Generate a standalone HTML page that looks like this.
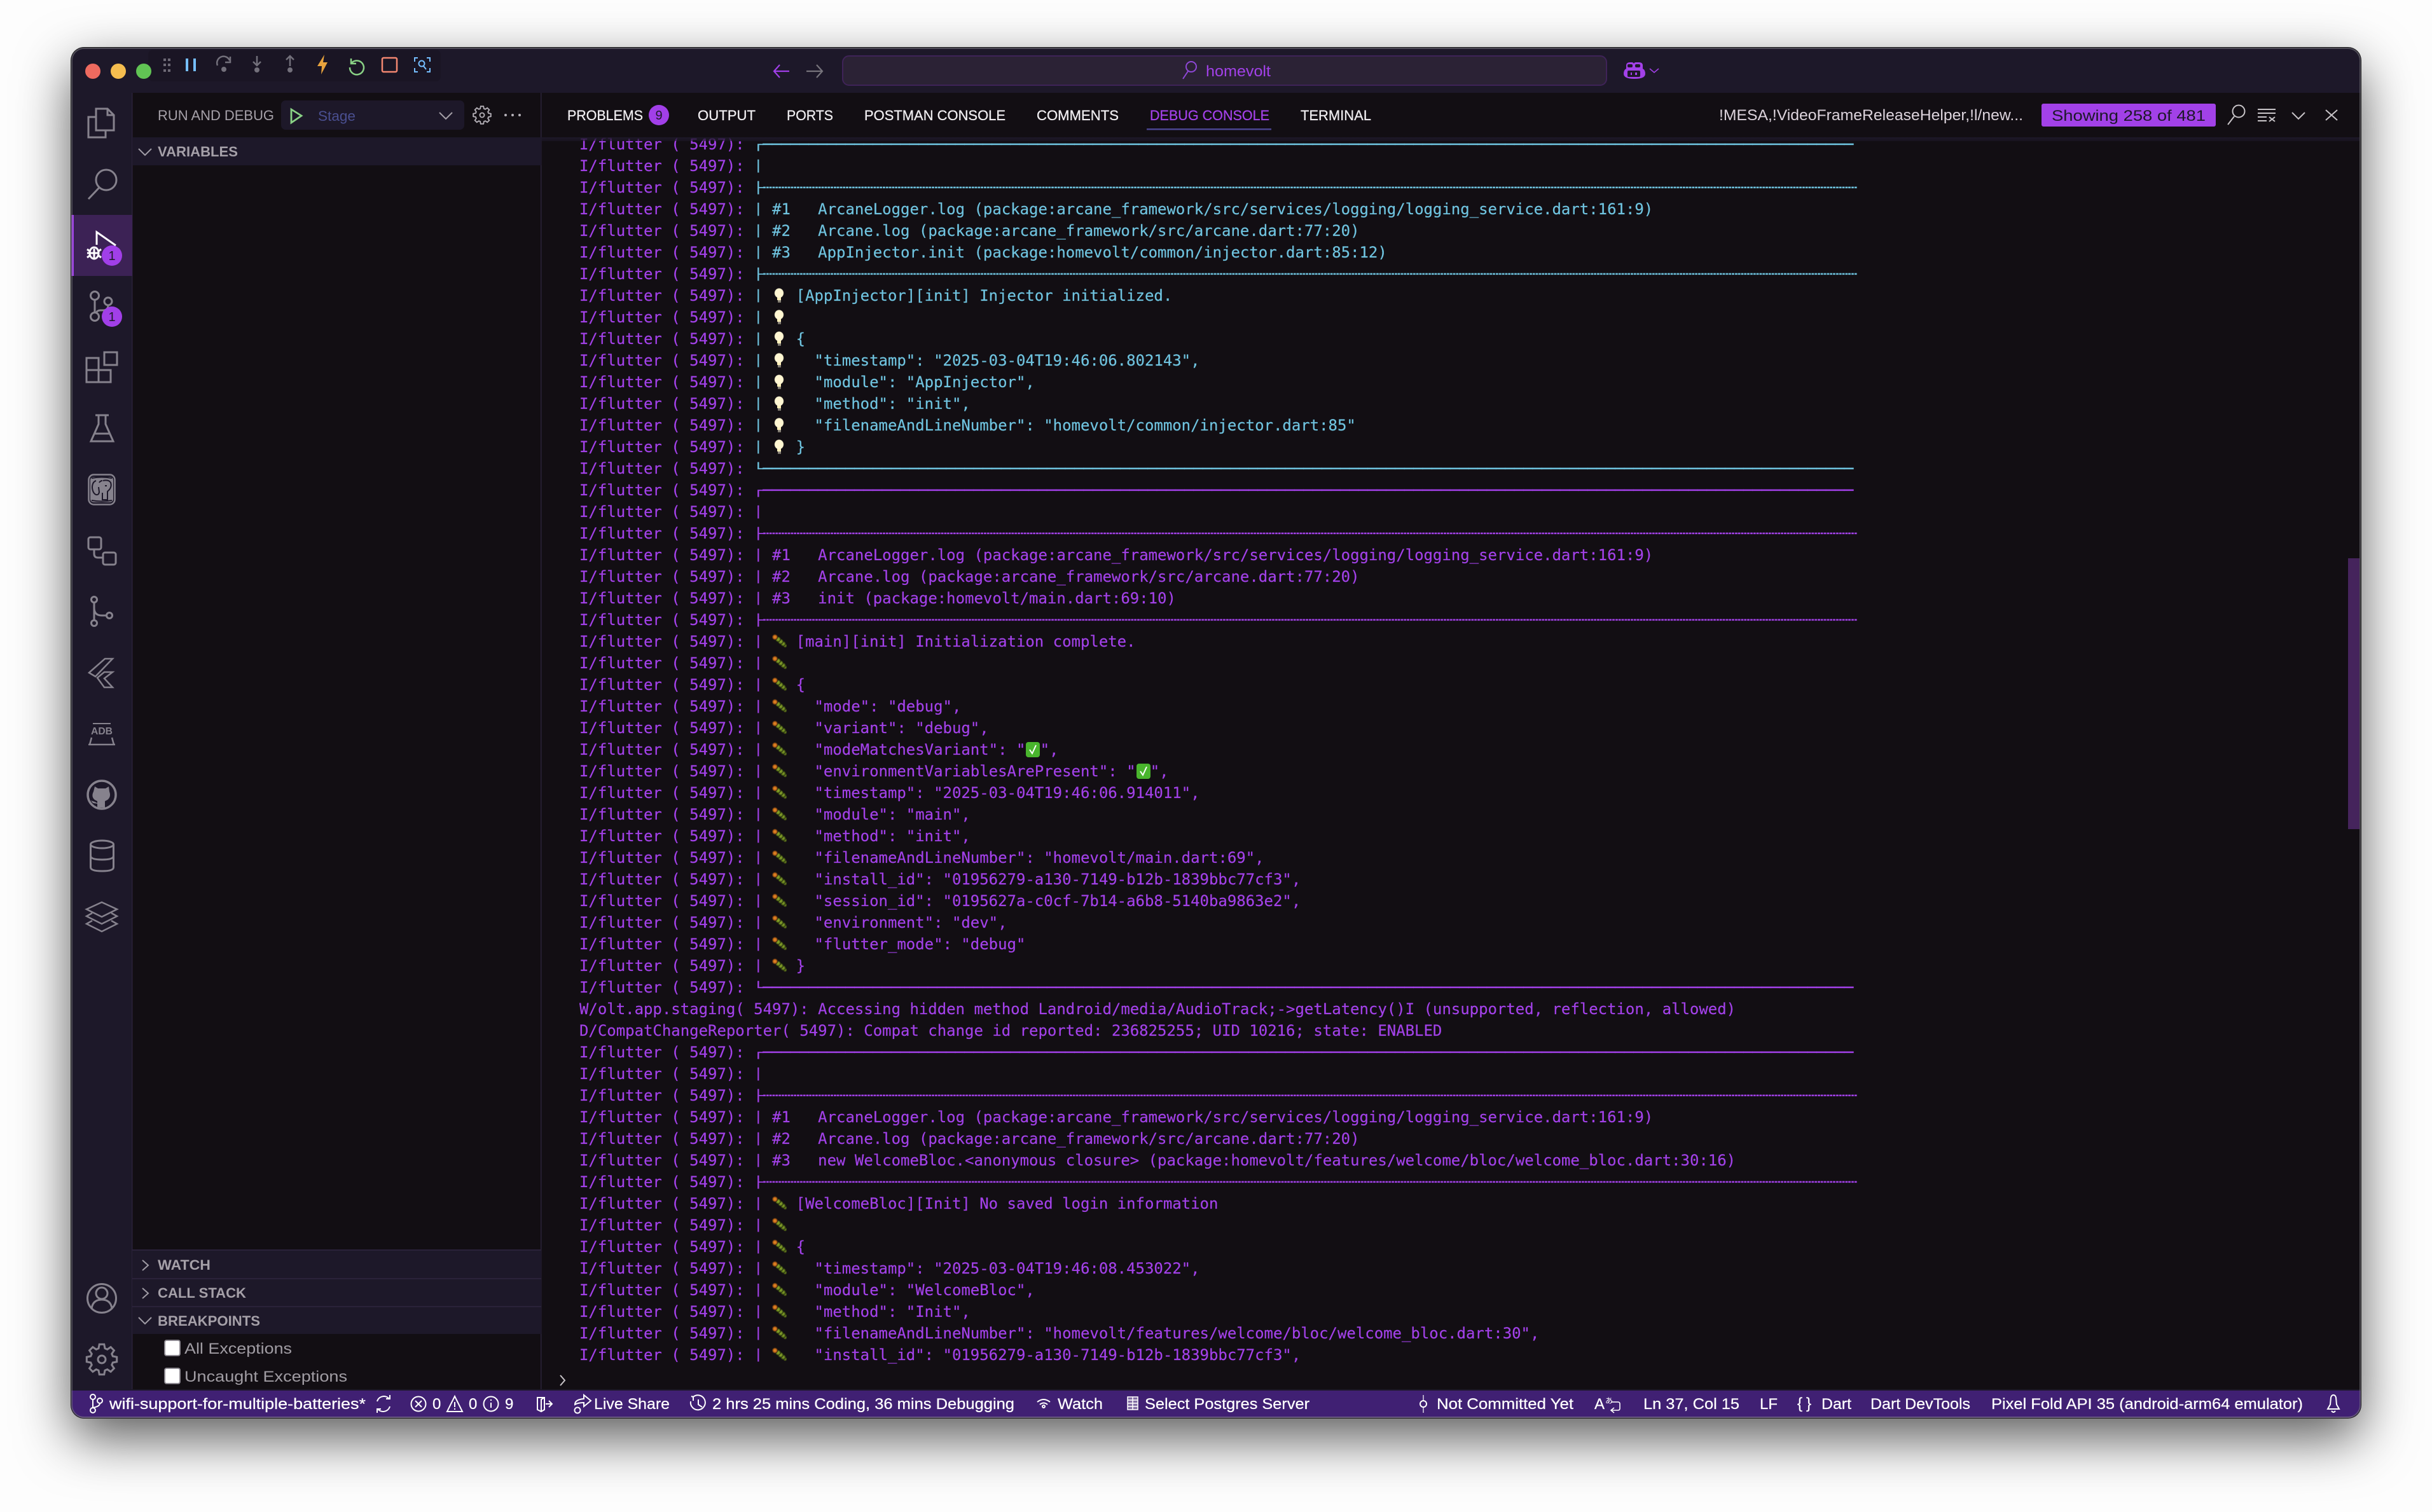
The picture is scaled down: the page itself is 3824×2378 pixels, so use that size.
<!DOCTYPE html>
<html lang="en"><head><meta charset="utf-8"><title>homevolt</title>
<style>
html,body{margin:0;padding:0;background:#fdfdfd;width:3824px;height:2378px;overflow:hidden}
#win{position:absolute;left:112px;top:75px;width:3600px;height:2155px;border-radius:20px;background:#120e13;box-shadow:0 0 0 1px #1a1a1a,0 31px 84px rgba(0,0,0,.65)}
#ui{position:absolute;left:0;top:0}
#ui text{font-family:"Liberation Sans","Noto Sans CJK JP",sans-serif}
#log{position:absolute;left:911px;top:216px;width:2780px;height:1971px;overflow:hidden;font:24px/34px "DejaVu Sans Mono","Liberation Mono",monospace;letter-spacing:-.02px;color:#a241e8;-webkit-text-stroke:.2px}
#in{position:absolute;left:0;top:-6px}
#in div{height:34px;white-space:pre}
em{font-style:normal;color:#6fc3df}
u{display:inline-block;text-decoration:none;transform:scaleY(.72)}
.h{letter-spacing:-.04px;-webkit-text-stroke:.5px}
.d{letter-spacing:.01px;-webkit-text-stroke:.4px}
.b,.l,.k{display:inline-block;width:23.2px;height:34px;vertical-align:top;background-repeat:no-repeat;-webkit-text-stroke:0}
.b{background-image:radial-gradient(circle at 4.5px 10px,#e09428 0,#d4731a 2px,#9c5018 3.2px,#33240f 4.2px,transparent 5px),radial-gradient(circle at 9.5px 13.5px,#93ad28 0,#6e8820 2.4px,#222a0c 4px,transparent 4.6px),radial-gradient(circle at 13.5px 17px,#93ad28 0,#678224 2.4px,#222a0c 4px,transparent 4.6px),radial-gradient(circle at 17.5px 20.5px,#8aa426 0,#607a1f 2.2px,#222a0c 3.8px,transparent 4.4px),radial-gradient(circle at 20.5px 23.5px,#7c9423 0,#414f15 2.2px,transparent 3.2px)}
.l{background-image:radial-gradient(ellipse 7.5px 8px at 11px 13px,#fff6d2 88%,transparent 100%),linear-gradient(#fff0b8,#fff0b8),linear-gradient(#9c968a,#6f6a60);background-size:100% 100%,6px 5px,5px 4px;background-position:0 0,8px 19px,8.5px 24px}
.k{position:relative}
.k svg{position:absolute;left:0;top:5px}
#sb{position:absolute;left:3692px;top:878px;width:18px;height:426px;background:#45245c}
#sh{position:absolute;left:851px;top:216px;width:2859px;height:6px;background:linear-gradient(#1d1829,rgba(29,24,41,.5))}
#rim{position:absolute;left:112px;top:75px;width:3600px;height:2155px;border-radius:20px;box-shadow:inset 0 0 0 2px rgba(120,120,125,.55);pointer-events:none}
</style></head><body>
<div id="win"></div>
<svg id="ui" width="3824" height="2378" viewBox="0 0 3824 2378" xmlns="http://www.w3.org/2000/svg">
<defs><clipPath id="wc"><rect x="112" y="75" width="3600" height="2155" rx="20"/></clipPath></defs>
<g clip-path="url(#wc)">
<rect x="112" y="75" width="3600" height="71" fill="#1d1829"/>
<rect x="112" y="146" width="96" height="2041" fill="#1d1829"/>
<rect x="207" y="146" width="1.5" height="2041" fill="#2a2239"/>
<rect x="850" y="146" width="1.5" height="2041" fill="#2a2239"/>
<rect x="208" y="216" width="643" height="44" fill="#1d1829"/>
<rect x="208" y="1967" width="643" height="131" fill="#1d1829"/>
<rect x="208" y="1965" width="643" height="2" fill="#2a2239"/><rect x="208" y="2010" width="643" height="2" fill="#2a2239"/><rect x="208" y="2054" width="643" height="2" fill="#2a2239"/>
<rect x="112" y="338" width="96" height="96" fill="#3c2255"/><rect x="112" y="338" width="4" height="96" fill="#a13fe8"/>
<rect x="112" y="2185" width="3600" height="2" fill="#1d1829"/>
<rect x="112" y="2187" width="3600" height="43" fill="#402073"/><rect x="112" y="2228" width="3600" height="2" fill="#5f3d8a"/>
</g>
<!-- debug toolbar -->
<rect x="233" y="78" width="460" height="50" rx="8" fill="#1a1524"/>
<!-- traffic lights -->
<circle cx="146" cy="112" r="12" fill="#ee6a5f"/><circle cx="186" cy="112" r="12" fill="#f5bd4f"/><circle cx="226" cy="112" r="12" fill="#61c454"/>
<g fill="#6d6975"><rect x="257" y="92" width="4" height="4"/><rect x="264" y="92" width="4" height="4"/><rect x="257" y="100" width="4" height="4"/><rect x="264" y="100" width="4" height="4"/><rect x="257" y="109" width="4" height="4"/><rect x="264" y="109" width="4" height="4"/></g>
<rect x="292" y="92" width="4" height="20" fill="#75beff"/><rect x="304" y="92" width="4" height="20" fill="#75beff"/>
<g fill="none" stroke="#73707b" stroke-width="2.5"><path d="M342 103a10 10 0 0 1 19-8M362 89v9h-8"/><path d="M404 88v15M398 97l6 6 6-6"/><path d="M456 104V88M450 94l6-6 6 6"/></g>
<g fill="#73707b"><circle cx="352" cy="109" r="4"/><circle cx="404" cy="110" r="4"/><circle cx="456" cy="110" r="4"/></g>
<path d="M510 86L499 104h7l-1 13 10-19h-7z" fill="#e8a33d"/>
<path d="M552 92v8h8M552 100a11 11 0 1 1-2 6" fill="none" stroke="#89d185" stroke-width="2.5"/>
<rect x="601" y="91" width="23" height="22" rx="2" fill="none" stroke="#f48771" stroke-width="2.5"/>
<path d="M652 97v-6h5M671 91h5v6M652 107v6h5M671 113h5v-6" fill="none" stroke="#75beff" stroke-width="2"/><circle cx="663" cy="100" r="4.5" fill="none" stroke="#75beff" stroke-width="2"/><path d="M666 104l4 5" stroke="#75beff" stroke-width="2"/>
<!-- nav + command center -->
<path d="M1241 112h-24M1226 102l-9 10 9 10" fill="none" stroke="#a03fe8" stroke-width="2.2"/>
<path d="M1268 112h24M1284 102l9 10-9 10" fill="none" stroke="#77747c" stroke-width="2.2"/>
<rect x="1325" y="88" width="1201" height="46" rx="10" fill="#2b2235" stroke="#3f2358" stroke-width="2"/>
<circle cx="1873" cy="105" r="8" fill="none" stroke="#8e47d6" stroke-width="2"/><path d="M1868 112l-8 12" stroke="#8e47d6" stroke-width="2"/>
<text x="1896" y="120" font-size="24" fill="#a241e8" textLength="102" lengthAdjust="spacingAndGlyphs">homevolt</text>
<!-- copilot -->
<path d="M2553 116q0-6 4-8v-5q0-5 6-5h3q2 0 3 2q1-2 3-2h5q6 0 6 5v5q4 2 4 8q0 8-17 8t-17-8z" fill="#a241e8"/>
<rect x="2559" y="111" width="20" height="10" rx="2" fill="#1d1829"/><rect x="2559" y="101" width="8" height="5" rx="2" fill="#1d1829"/><rect x="2571" y="101" width="8" height="5" rx="2" fill="#1d1829"/>
<rect x="2564" y="114" width="2" height="4" fill="#a241e8"/><rect x="2571" y="114" width="3" height="4" fill="#a241e8"/>
<path d="M2594 108l7 6 7-6" fill="none" stroke="#a241e8" stroke-width="1.6"/>
<!-- tabs -->
<g font-size="22" fill="#efedf0" stroke="#efedf0" stroke-width=".3">
<text x="892" y="189" textLength="119" lengthAdjust="spacingAndGlyphs">PROBLEMS</text>
<text x="1097" y="189" textLength="91" lengthAdjust="spacingAndGlyphs">OUTPUT</text>
<text x="1237" y="189" textLength="73" lengthAdjust="spacingAndGlyphs">PORTS</text>
<text x="1359" y="189" textLength="222" lengthAdjust="spacingAndGlyphs">POSTMAN CONSOLE</text>
<text x="1630" y="189" textLength="129" lengthAdjust="spacingAndGlyphs">COMMENTS</text>
<text x="1808" y="189" textLength="188" lengthAdjust="spacingAndGlyphs" fill="#a241e8" stroke="#a241e8">DEBUG CONSOLE</text>
<text x="2045" y="189" textLength="111" lengthAdjust="spacingAndGlyphs">TERMINAL</text>
</g>
<circle cx="1036" cy="181" r="16" fill="#a13fe8"/><text x="1036" y="188" font-size="20" fill="#1d1829" text-anchor="middle">9</text>
<rect x="1803" y="202" width="196" height="2.5" fill="#4a4590"/>
<text x="2703" y="189" font-size="24" fill="#dcd3dc" textLength="478" lengthAdjust="spacingAndGlyphs">!MESA,!VideoFrameReleaseHelper,!l/new...</text>
<rect x="3210" y="163" width="274" height="36" rx="3" fill="#a241e8"/>
<text x="3226" y="190" font-size="24" fill="#1d1829" textLength="242" lengthAdjust="spacingAndGlyphs">Showing 258 of 481</text>
<g fill="none" stroke="#c8c4c8" stroke-width="2"><circle cx="3520" cy="175" r="9.5"/><path d="M3513 183l-10 13"/><path d="M3550 172h28M3550 178h28M3550 184h14M3550 190h14M3568 184l9 7M3577 184l-9 7"/><path d="M3604 177l10 10 10-10"/><path d="M3657 173l18 16M3675 173l-18 16"/></g>
<!-- sidebar header -->
<text x="248" y="189" font-size="22" fill="#a5a0a8" textLength="183" lengthAdjust="spacingAndGlyphs">RUN AND DEBUG</text>
<rect x="442" y="158" width="288" height="46" rx="7" fill="#1d1829"/>
<path d="M458 172l16 10-16 11z" fill="none" stroke="#89d185" stroke-width="2.8"/>
<text x="500" y="190" font-size="22" fill="#4a4f90" textLength="59" lengthAdjust="spacingAndGlyphs">Stage</text>
<path d="M691 177l10 10 10-10" fill="none" stroke="#a5a0a8" stroke-width="2"/>
<g transform="translate(758 181) scale(.583)" fill="none" stroke="#b5b1b8" stroke-width="3.2"><path d="M17.3-5L23.7-3.75 23.7 3.75 17.3 5 15.74 8.73 19.4 14.1 14.1 19.4 8.73 15.74 5 17.3 3.75 23.7-3.75 23.7-5 17.3-8.73 15.74-14.1 19.4-19.4 14.1-15.74 8.73-17.3 5-23.7 3.75-23.7-3.75-17.3-5-15.74-8.73-19.4-14.1-14.1-19.4-8.73-15.74-5-17.3-3.75-23.7 3.75-23.7 5-17.3 8.73-15.74 14.1-19.4 19.4-14.1 15.74-8.73z"/><circle r="6"/></g>
<g fill="#b5b1b8"><circle cx="795" cy="181" r="2"/><circle cx="806" cy="181" r="2"/><circle cx="817" cy="181" r="2"/></g>
<!-- section headers -->
<g fill="none" stroke="#a09ca5" stroke-width="2"><path d="M218 234l10 10 10-10"/><path d="M224 1982l9 8-9 8"/><path d="M224 2026l9 8-9 8"/><path d="M218 2072l10 10 10-10"/></g>
<g font-size="22" font-weight="700" fill="#a5a0a8">
<text x="248" y="246" textLength="126" lengthAdjust="spacingAndGlyphs">VARIABLES</text>
<text x="248" y="1997" textLength="83" lengthAdjust="spacingAndGlyphs">WATCH</text>
<text x="248" y="2041" textLength="139" lengthAdjust="spacingAndGlyphs">CALL STACK</text>
<text x="248" y="2085" textLength="161" lengthAdjust="spacingAndGlyphs">BREAKPOINTS</text>
</g>
<rect x="259" y="2108" width="24" height="24" rx="3" fill="#fff" stroke="#8c8890" stroke-width="2"/>
<rect x="259" y="2152" width="24" height="24" rx="3" fill="#fff" stroke="#8c8890" stroke-width="2"/>
<g font-size="24" fill="#a09ca3"><text x="290" y="2129" textLength="169" lengthAdjust="spacingAndGlyphs">All Exceptions</text><text x="290" y="2173" textLength="256" lengthAdjust="spacingAndGlyphs">Uncaught Exceptions</text></g>
<path d="M881 2163l7 8-7 8" fill="none" stroke="#c8c4c8" stroke-width="2"/>
<!-- activity bar icons -->
<g fill="none" stroke="#86828d" stroke-width="3">
<path d="M151 205V171h18l10 10v24zM169 171v10h10M151 184h-12v32h27v-11"/>
<circle cx="167" cy="283" r="16"/><path d="M156 295l-17 18"/>
<circle cx="149" cy="465" r="6.5"/><circle cx="170" cy="474" r="6"/><circle cx="149" cy="498" r="6.5"/><path d="M149 472v19M170 480q0 8-8 8h-4q-5 0-7 4"/>
<path d="M136 563h19v38h-19zM136 582h38v19h-19M164 554h20v20h-20z"/>
<path d="M150 653h21M155 653v14l-12 27h35l-12-27v-14M149 682h23"/>
<rect x="139.500" y="746.500" width="41" height="47" rx="8" stroke-width="2.5"/>
<rect x="139" y="845" width="20" height="19" rx="3"/><rect x="162" y="869" width="20" height="19" rx="3"/><path d="M148 864v7q0 6 6 6h8"/>
<circle cx="148" cy="943" r="4.5"/><circle cx="148" cy="980" r="4.5"/><circle cx="172" cy="968" r="4.5"/><path d="M148 948v27M148 956q0 12 12 12h7"/>
<path d="M140 1058l25-22h12l-27 28zM153 1066l11-9h13l-13 10 13 14h-13z" stroke-width="2.5"/>
<path d="M146 1138h28" stroke-width="2"/><path d="M141 1171l3-11M179 1171l-3-11M139 1171h42" stroke-width="2.5"/>
<circle cx="160" cy="1250" r="22" stroke-width="3.5"/>
<ellipse cx="160.500" cy="1328" rx="18" ry="6"/><path d="M142.500 1328v36q0 6 18 6t18-6v-36M142.500 1346q0 6 18 6t18-6"/>
<path d="M160 1419l24 11-24 12-24-12zM145 1436l-9 5 24 12 24-12-9-5M145 1448l-9 5 24 12 24-12-9-5" stroke-width="2.5"/>
<circle cx="160" cy="2042" r="22.500"/><circle cx="160" cy="2034" r="9"/><path d="M144 2058q2-14 16-14t16 14"/>
</g>
<rect x="142" y="750" width="36" height="40" rx="5" fill="#86828d"/>
<g fill="none" stroke="#1d1829" stroke-width="2"><path d="M144 752q16-3 32 0"/><path d="M151 756q-6 2-6 11 1 9 6 11 4 1 5-4l-1-8"/><path d="M156 759q2-3 5-3"/><path d="M162 756q9-2 12 3 2 6-2 11l-3 3v13h-8v-11"/><path d="M165 764h3"/><path d="M144 787q16 3 32 0"/></g>
<text x="160" y="1155" font-size="16" font-weight="700" fill="#86828d" text-anchor="middle" textLength="34" lengthAdjust="spacingAndGlyphs">ADB</text>
<path d="M149 1237l5 3h12l5-3 1 8q3 8-3 13l-4 2v10h-12v-6l-7-1-3-4 6 2 4 2v-3l-4-2q-6-5-2-13z" fill="#86828d"/>
<g transform="translate(160 2138)" fill="none" stroke="#86828d" stroke-width="3"><path d="M17.3-5L23.7-3.75 23.7 3.75 17.3 5 15.74 8.73 19.4 14.1 14.1 19.4 8.73 15.74 5 17.3 3.75 23.7-3.75 23.7-5 17.3-8.73 15.74-14.1 19.4-19.4 14.1-15.74 8.73-17.3 5-23.7 3.75-23.7-3.75-17.3-5-15.74-8.73-19.4-14.1-14.1-19.4-8.73-15.74-5-17.3-3.75-23.7 3.75-23.7 5-17.3 8.73-15.74 14.1-19.4 19.4-14.1 15.74-8.73z"/><circle r="6"/></g>
<!-- debug active icon -->
<g fill="none" stroke="#fff" stroke-width="3"><path d="M152 385V365l30 21"/><ellipse cx="148" cy="398" rx="7" ry="9"/><path d="M141 398h14M148 391v16M137 392l4 3M137 398h4M137 405l4-3M159 392l-4 3M159 405l-4-3"/></g>
<circle cx="176" cy="402" r="16" fill="#a13fe8"/><text x="176" y="409" font-size="20" fill="#1d1829" text-anchor="middle">1</text>
<circle cx="176" cy="498" r="16" fill="#a13fe8"/><text x="176" y="505" font-size="20" fill="#1d1829" text-anchor="middle">1</text>
<!-- status bar -->
<g fill="none" stroke="#fff" stroke-width="2">
<circle cx="146" cy="2197" r="4"/><circle cx="157" cy="2203" r="4"/><circle cx="146" cy="2218" r="4"/><path d="M146 2201v13M157 2207q0 5-11 7"/>
<path d="M593 2204a11 11 0 0 1 19-4M613 2212a11 11 0 0 1-19 4M613 2194v6h-6M593 2222v-6h6"/>
<circle cx="658" cy="2208" r="11.500"/><path d="M653 2203l10 10M663 2203l-10 10"/>
<path d="M715 2196l12 24h-24zM715 2205v8M715 2215v2"/>
<circle cx="772" cy="2208" r="11.500"/><path d="M772 2206v8M772 2201v2"/>
<path d="M845 2198h11v19l-5 3-6-3zM856 2198l-5 3v19M858 2208h9M863 2203l5 5-5 5"/>
<path d="M904 2209q0-8 14-9v-6l11 9-11 9v-6q-9 0-14 3z"/><circle cx="908" cy="2218" r="4.500"/>
<path d="M1090 2197a11.500 11.500 0 1 1-4 7M1087 2196l3 1v6M1098 2201v8l6 4"/>
<path d="M1631 2205q10-8 20 0M1635 2209q6-5 12 0"/><circle cx="1641" cy="2212" r="2"/>
<rect x="1773" y="2197" width="16" height="20" stroke-width="1.5" fill="#fff" fill-opacity=".35"/><path d="M1773 2202h16M1773 2207h16M1773 2212h16M1781 2197v20" stroke-width="1.5"/>
<circle cx="2238" cy="2208" r="5"/><path d="M2238 2194v9M2238 2213v9" stroke-width="1.2"/>
<path d="M2533 2205h11q3 0 3 3v7q0 3-3 3h-10M2538 2214l-5 4 5 4" stroke-width="1.6"/>
<path d="M3669 2194q-3 0-4 4l-1 11-4 7h18l-4-7-1-11q-1-4-4-4zM3666 2219q3 4 6 0"/>
</g>
<g font-size="24" fill="#fff" stroke="#fff" stroke-width=".25">
<text x="172" y="2216" textLength="403" lengthAdjust="spacingAndGlyphs">wifi-support-for-multiple-batteries*</text>
<text x="680" y="2216">0</text><text x="737" y="2216">0</text><text x="794" y="2216">9</text>
<text x="934" y="2216" textLength="119" lengthAdjust="spacingAndGlyphs">Live Share</text>
<text x="1120" y="2216" textLength="475" lengthAdjust="spacingAndGlyphs">2 hrs 25 mins Coding, 36 mins Debugging</text>
<text x="1663" y="2216" textLength="71" lengthAdjust="spacingAndGlyphs">Watch</text>
<text x="1800" y="2216" textLength="259" lengthAdjust="spacingAndGlyphs">Select Postgres Server</text>
<text x="2259" y="2216" textLength="215" lengthAdjust="spacingAndGlyphs">Not Committed Yet</text>
<text x="2507" y="2216" textLength="16" lengthAdjust="spacingAndGlyphs">A</text>
<text x="2524" y="2207" font-size="12" stroke="none">あ</text>
<text x="2584" y="2216" textLength="151" lengthAdjust="spacingAndGlyphs">Ln 37, Col 15</text>
<text x="2767" y="2216" textLength="28" lengthAdjust="spacingAndGlyphs">LF</text>
<text x="2826" y="2215" textLength="22" lengthAdjust="spacing">{}</text>
<text x="2864" y="2216" textLength="47" lengthAdjust="spacingAndGlyphs">Dart</text>
<text x="2941" y="2216" textLength="157" lengthAdjust="spacingAndGlyphs">Dart DevTools</text>
<text x="3131" y="2216" textLength="490" lengthAdjust="spacingAndGlyphs">Pixel Fold API 35 (android-arm64 emulator)</text>
</g>
</svg>
<div id="log"><div id="in"><div>I/flutter ( 5497): <em class="h"><u>┌</u>───────────────────────────────────────────────────────────────────────────────────────────────────────────────────────</em></div>
<div>I/flutter ( 5497): <em><u>│</u></em></div>
<div>I/flutter ( 5497): <em class="d"><u>├</u>┄┄┄┄┄┄┄┄┄┄┄┄┄┄┄┄┄┄┄┄┄┄┄┄┄┄┄┄┄┄┄┄┄┄┄┄┄┄┄┄┄┄┄┄┄┄┄┄┄┄┄┄┄┄┄┄┄┄┄┄┄┄┄┄┄┄┄┄┄┄┄┄┄┄┄┄┄┄┄┄┄┄┄┄┄┄┄┄┄┄┄┄┄┄┄┄┄┄┄┄┄┄┄┄┄┄┄┄┄┄┄┄┄┄┄┄┄┄┄</em></div>
<div>I/flutter ( 5497): <em><u>│</u> #1   ArcaneLogger.log (package:arcane_framework/src/services/logging/logging_service.dart:161:9)</em></div>
<div>I/flutter ( 5497): <em><u>│</u> #2   Arcane.log (package:arcane_framework/src/arcane.dart:77:20)</em></div>
<div>I/flutter ( 5497): <em><u>│</u> #3   AppInjector.init (package:homevolt/common/injector.dart:85:12)</em></div>
<div>I/flutter ( 5497): <em class="d"><u>├</u>┄┄┄┄┄┄┄┄┄┄┄┄┄┄┄┄┄┄┄┄┄┄┄┄┄┄┄┄┄┄┄┄┄┄┄┄┄┄┄┄┄┄┄┄┄┄┄┄┄┄┄┄┄┄┄┄┄┄┄┄┄┄┄┄┄┄┄┄┄┄┄┄┄┄┄┄┄┄┄┄┄┄┄┄┄┄┄┄┄┄┄┄┄┄┄┄┄┄┄┄┄┄┄┄┄┄┄┄┄┄┄┄┄┄┄┄┄┄┄</em></div>
<div>I/flutter ( 5497): <em><u>│</u> <i class="l"></i> [AppInjector][init] Injector initialized.</em></div>
<div>I/flutter ( 5497): <em><u>│</u> <i class="l"></i></em></div>
<div>I/flutter ( 5497): <em><u>│</u> <i class="l"></i> {</em></div>
<div>I/flutter ( 5497): <em><u>│</u> <i class="l"></i>   "timestamp": "2025-03-04T19:46:06.802143",</em></div>
<div>I/flutter ( 5497): <em><u>│</u> <i class="l"></i>   "module": "AppInjector",</em></div>
<div>I/flutter ( 5497): <em><u>│</u> <i class="l"></i>   "method": "init",</em></div>
<div>I/flutter ( 5497): <em><u>│</u> <i class="l"></i>   "filenameAndLineNumber": "homevolt/common/injector.dart:85"</em></div>
<div>I/flutter ( 5497): <em><u>│</u> <i class="l"></i> }</em></div>
<div>I/flutter ( 5497): <em class="h"><u>└</u>───────────────────────────────────────────────────────────────────────────────────────────────────────────────────────</em></div>
<div>I/flutter ( 5497): <span class="h"><u>┌</u>───────────────────────────────────────────────────────────────────────────────────────────────────────────────────────</span></div>
<div>I/flutter ( 5497): <u>│</u></div>
<div>I/flutter ( 5497): <span class="d"><u>├</u>┄┄┄┄┄┄┄┄┄┄┄┄┄┄┄┄┄┄┄┄┄┄┄┄┄┄┄┄┄┄┄┄┄┄┄┄┄┄┄┄┄┄┄┄┄┄┄┄┄┄┄┄┄┄┄┄┄┄┄┄┄┄┄┄┄┄┄┄┄┄┄┄┄┄┄┄┄┄┄┄┄┄┄┄┄┄┄┄┄┄┄┄┄┄┄┄┄┄┄┄┄┄┄┄┄┄┄┄┄┄┄┄┄┄┄┄┄┄┄</span></div>
<div>I/flutter ( 5497): <u>│</u> #1   ArcaneLogger.log (package:arcane_framework/src/services/logging/logging_service.dart:161:9)</div>
<div>I/flutter ( 5497): <u>│</u> #2   Arcane.log (package:arcane_framework/src/arcane.dart:77:20)</div>
<div>I/flutter ( 5497): <u>│</u> #3   init (package:homevolt/main.dart:69:10)</div>
<div>I/flutter ( 5497): <span class="d"><u>├</u>┄┄┄┄┄┄┄┄┄┄┄┄┄┄┄┄┄┄┄┄┄┄┄┄┄┄┄┄┄┄┄┄┄┄┄┄┄┄┄┄┄┄┄┄┄┄┄┄┄┄┄┄┄┄┄┄┄┄┄┄┄┄┄┄┄┄┄┄┄┄┄┄┄┄┄┄┄┄┄┄┄┄┄┄┄┄┄┄┄┄┄┄┄┄┄┄┄┄┄┄┄┄┄┄┄┄┄┄┄┄┄┄┄┄┄┄┄┄┄</span></div>
<div>I/flutter ( 5497): <u>│</u> <i class="b"></i> [main][init] Initialization complete.</div>
<div>I/flutter ( 5497): <u>│</u> <i class="b"></i></div>
<div>I/flutter ( 5497): <u>│</u> <i class="b"></i> {</div>
<div>I/flutter ( 5497): <u>│</u> <i class="b"></i>   "mode": "debug",</div>
<div>I/flutter ( 5497): <u>│</u> <i class="b"></i>   "variant": "debug",</div>
<div>I/flutter ( 5497): <u>│</u> <i class="b"></i>   "modeMatchesVariant": "<i class="k"><svg width="24" height="24" viewBox="0 0 24 24"><rect x="1" y="0" width="22" height="24" rx="4" fill="#49b52d"/><path d="M7 12l4 6 6-13" fill="none" stroke="#fff" stroke-width="2"/></svg></i>",</div>
<div>I/flutter ( 5497): <u>│</u> <i class="b"></i>   "environmentVariablesArePresent": "<i class="k"><svg width="24" height="24" viewBox="0 0 24 24"><rect x="1" y="0" width="22" height="24" rx="4" fill="#49b52d"/><path d="M7 12l4 6 6-13" fill="none" stroke="#fff" stroke-width="2"/></svg></i>",</div>
<div>I/flutter ( 5497): <u>│</u> <i class="b"></i>   "timestamp": "2025-03-04T19:46:06.914011",</div>
<div>I/flutter ( 5497): <u>│</u> <i class="b"></i>   "module": "main",</div>
<div>I/flutter ( 5497): <u>│</u> <i class="b"></i>   "method": "init",</div>
<div>I/flutter ( 5497): <u>│</u> <i class="b"></i>   "filenameAndLineNumber": "homevolt/main.dart:69",</div>
<div>I/flutter ( 5497): <u>│</u> <i class="b"></i>   "install_id": "01956279-a130-7149-b12b-1839bbc77cf3",</div>
<div>I/flutter ( 5497): <u>│</u> <i class="b"></i>   "session_id": "0195627a-c0cf-7b14-a6b8-5140ba9863e2",</div>
<div>I/flutter ( 5497): <u>│</u> <i class="b"></i>   "environment": "dev",</div>
<div>I/flutter ( 5497): <u>│</u> <i class="b"></i>   "flutter_mode": "debug"</div>
<div>I/flutter ( 5497): <u>│</u> <i class="b"></i> }</div>
<div>I/flutter ( 5497): <span class="h"><u>└</u>───────────────────────────────────────────────────────────────────────────────────────────────────────────────────────</span></div>
<div>W/olt.app.staging( 5497): Accessing hidden method Landroid/media/AudioTrack;-&gt;getLatency()I (unsupported, reflection, allowed)</div>
<div>D/CompatChangeReporter( 5497): Compat change id reported: 236825255; UID 10216; state: ENABLED</div>
<div>I/flutter ( 5497): <span class="h"><u>┌</u>───────────────────────────────────────────────────────────────────────────────────────────────────────────────────────</span></div>
<div>I/flutter ( 5497): <u>│</u></div>
<div>I/flutter ( 5497): <span class="d"><u>├</u>┄┄┄┄┄┄┄┄┄┄┄┄┄┄┄┄┄┄┄┄┄┄┄┄┄┄┄┄┄┄┄┄┄┄┄┄┄┄┄┄┄┄┄┄┄┄┄┄┄┄┄┄┄┄┄┄┄┄┄┄┄┄┄┄┄┄┄┄┄┄┄┄┄┄┄┄┄┄┄┄┄┄┄┄┄┄┄┄┄┄┄┄┄┄┄┄┄┄┄┄┄┄┄┄┄┄┄┄┄┄┄┄┄┄┄┄┄┄┄</span></div>
<div>I/flutter ( 5497): <u>│</u> #1   ArcaneLogger.log (package:arcane_framework/src/services/logging/logging_service.dart:161:9)</div>
<div>I/flutter ( 5497): <u>│</u> #2   Arcane.log (package:arcane_framework/src/arcane.dart:77:20)</div>
<div>I/flutter ( 5497): <u>│</u> #3   new WelcomeBloc.&lt;anonymous closure&gt; (package:homevolt/features/welcome/bloc/welcome_bloc.dart:30:16)</div>
<div>I/flutter ( 5497): <span class="d"><u>├</u>┄┄┄┄┄┄┄┄┄┄┄┄┄┄┄┄┄┄┄┄┄┄┄┄┄┄┄┄┄┄┄┄┄┄┄┄┄┄┄┄┄┄┄┄┄┄┄┄┄┄┄┄┄┄┄┄┄┄┄┄┄┄┄┄┄┄┄┄┄┄┄┄┄┄┄┄┄┄┄┄┄┄┄┄┄┄┄┄┄┄┄┄┄┄┄┄┄┄┄┄┄┄┄┄┄┄┄┄┄┄┄┄┄┄┄┄┄┄┄</span></div>
<div>I/flutter ( 5497): <u>│</u> <i class="b"></i> [WelcomeBloc][Init] No saved login information</div>
<div>I/flutter ( 5497): <u>│</u> <i class="b"></i></div>
<div>I/flutter ( 5497): <u>│</u> <i class="b"></i> {</div>
<div>I/flutter ( 5497): <u>│</u> <i class="b"></i>   "timestamp": "2025-03-04T19:46:08.453022",</div>
<div>I/flutter ( 5497): <u>│</u> <i class="b"></i>   "module": "WelcomeBloc",</div>
<div>I/flutter ( 5497): <u>│</u> <i class="b"></i>   "method": "Init",</div>
<div>I/flutter ( 5497): <u>│</u> <i class="b"></i>   "filenameAndLineNumber": "homevolt/features/welcome/bloc/welcome_bloc.dart:30",</div>
<div>I/flutter ( 5497): <u>│</u> <i class="b"></i>   "install_id": "01956279-a130-7149-b12b-1839bbc77cf3",</div>
</div></div>
<div id="sh"></div>
<div id="sb"></div>
<div id="rim"></div>
</body></html>
